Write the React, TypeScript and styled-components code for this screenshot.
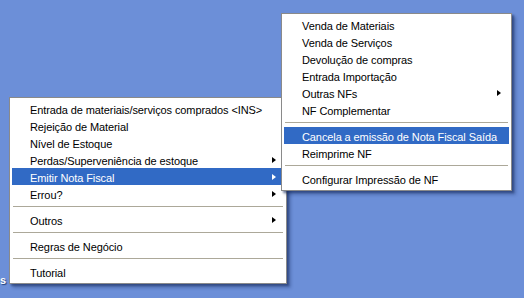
import styled, { createGlobalStyle } from 'styled-components';

type Entry = { label?: string; sub?: boolean; active?: boolean; sep?: boolean };

const mainMenu: Entry[] = [
  { label: 'Entrada de materiais/serviços comprados <INS>' },
  { label: 'Rejeição de Material' },
  { label: 'Nível de Estoque' },
  { label: 'Perdas/Superveniência de estoque', sub: true },
  { label: 'Emitir Nota Fiscal', sub: true, active: true },
  { label: 'Errou?', sub: true },
  { sep: true },
  { label: 'Outros', sub: true },
  { sep: true },
  { label: 'Regras de Negócio' },
  { sep: true },
  { label: 'Tutorial' },
];

const nfMenu: Entry[] = [
  { label: 'Venda de Materiais' },
  { label: 'Venda de Serviços' },
  { label: 'Devolução de compras' },
  { label: 'Entrada Importação' },
  { label: 'Outras NFs', sub: true },
  { label: 'NF Complementar' },
  { sep: true },
  { label: 'Cancela a emissão de Nota Fiscal Saída', active: true },
  { label: 'Reimprime NF' },
  { sep: true },
  { label: 'Configurar Impressão de NF' },
];

function Menu({ items, left, top, width }: { items: Entry[]; left: number; top: number; width: number }) {
  return (
    <StyledMenu style={{ left, top, width }}>
      {items.map((item, index) =>
        item.sep ? (
          <StyledSeparator key={index} />
        ) : (
          <StyledItem key={index} $active={item.active}>
            <span>{item.label}</span>
            {item.sub && <StyledArrow $active={item.active} />}
          </StyledItem>
        ),
      )}
    </StyledMenu>
  );
}

export default function App() {
  return (
    <>
      <GlobalStyle />
      <StyledDesktop>
        <StyledIconLabel>s</StyledIconLabel>
        <Menu items={mainMenu} left={9} top={97} width={278} />
        <Menu items={nfMenu} left={281} top={13} width={231} />
      </StyledDesktop>
    </>
  );
}

const GlobalStyle = createGlobalStyle`
  html, body {
    margin: 0;
    padding: 0;
  }
  body {
    font-family: Tahoma, "Liberation Sans", Arial, sans-serif;
    font-size: 11px;
  }
`;

const StyledDesktop = styled.div`
  position: relative;
  width: 524px;
  height: 298px;
  overflow: hidden;
  background-color: #6c8fd8;
`;

const StyledIconLabel = styled.div`
  position: absolute;
  left: 0;
  top: 274px;
  color: #ffffff;
  font-weight: bold;
  font-size: 11px;
  text-shadow: 1px 1px 1px #1e3c78;
`;

const StyledMenu = styled.div`
  position: absolute;
  box-sizing: border-box;
  display: flex;
  flex-direction: column;
  padding: 2px 2px 3px;
  background-color: #ffffff;
  border: 1px solid #8a8a8a;
  box-shadow: 2px 2px 2px rgba(20, 40, 90, 0.55), 4px 4px 3px rgba(20, 40, 90, 0.25);
`;

const StyledItem = styled.div<{ $active?: boolean }>`
  box-sizing: border-box;
  display: flex;
  align-items: center;
  justify-content: space-between;
  height: 17px;
  padding: 2px 8px 0 18px;
  letter-spacing: -0.1px;
  color: ${(p) => (p.$active ? '#ffffff' : '#000000')};
  background-color: ${(p) => (p.$active ? '#316ac5' : 'transparent')};
  white-space: nowrap;
`;

const StyledArrow = styled.i<{ $active?: boolean }>`
  width: 0;
  height: 0;
  margin-top: -2px;
  border-top: 3.5px solid transparent;
  border-bottom: 3.5px solid transparent;
  border-left: 4px solid ${(p) => (p.$active ? '#ffffff' : '#000000')};
`;

const StyledSeparator = styled.div`
  height: 9px;
  display: flex;
  align-items: center;
  &::before {
    content: '';
    flex: 1;
    margin: 0 1px;
    border-top: 1px solid #aca899;
  }
`;
